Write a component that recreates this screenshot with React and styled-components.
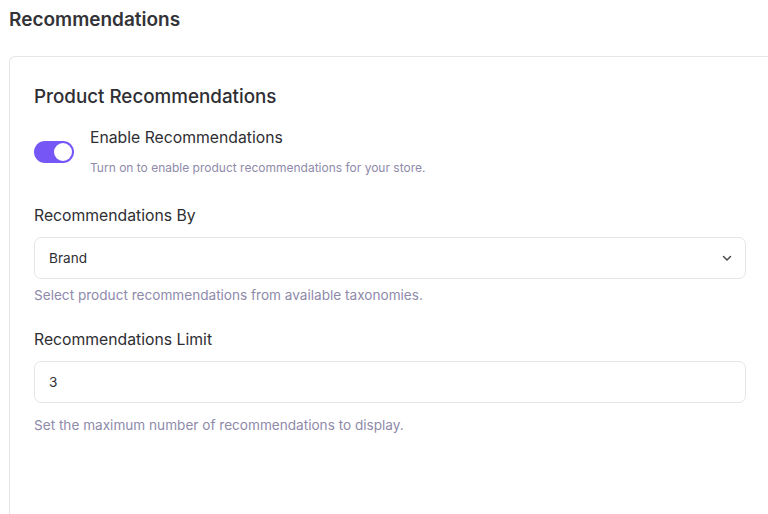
import React from "react";
import styled, { createGlobalStyle } from "styled-components";

const Global = createGlobalStyle`
  html, body { margin: 0; padding: 0; background: #fff; }
  body { font-family: Inter, "Noto Sans", sans-serif; color: #2e2e33; -webkit-font-smoothing: antialiased; }
  * { box-sizing: border-box; }
`;

const Page = styled.div`
  padding: 9px 0 0 9px;
  height: 514px;
  overflow: hidden;
`;

const PageTitle = styled.h1`
  margin: 0;
  font-size: 19px;
  font-weight: 600;
  line-height: 22px;
  color: #333338;
`;

const Card = styled.div`
  margin-top: 25px;
  border: 1px solid #e6e6e9;
  border-right: none;
  border-radius: 6px 0 0 0;
  padding: 28px 0 80px 24px;
  min-height: 500px;
`;

const CardTitle = styled.h2`
  margin: 0;
  font-size: 18.8px;
  font-weight: 500;
  line-height: 24px;
  color: #2e2e33;
`;

const ToggleRow = styled.div`
  display: flex;
  gap: 16px;
  margin-top: 18px;
`;

const Switch = styled.div`
  width: 40px;
  height: 22px;
  border-radius: 11px;
  background: ${p => (p.$on ? "#7657f6" : "#d4d4d8")};
  position: relative;
  margin-top: 14px;
  flex-shrink: 0;
`;

const Knob = styled.span`
  position: absolute;
  top: 2px;
  left: ${p => (p.$on ? "20px" : "2px")};
  width: 18px;
  height: 18px;
  border-radius: 50%;
  background: #fff;
`;

const ToggleText = styled.div`
  display: flex;
  flex-direction: column;
`;

const Label = styled.div`
  font-size: 15.75px;
  line-height: 22px;
  color: #2e2e33;
`;

const Help = styled.div`
  font-size: ${p => p.$size || 13.6}px;
  line-height: 18px;
  color: #8e8aaa;
  margin-top: ${p => p.$mt || 0}px;
`;

const Field = styled.div`
  margin-top: ${p => p.$mt}px;
  margin-right: 22px;
`;

const FieldLabel = styled.div`
  font-size: 15.75px;
  line-height: 22px;
  color: #2e2e33;
  margin-bottom: 10px;
`;

const Box = styled.div`
  height: 42px;
  border: 1px solid #e6e6e9;
  border-radius: 7px;
  display: flex;
  align-items: center;
  justify-content: space-between;
  padding: 0 12px 0 14px;
  font-size: 13.6px;
  color: #2e2e33;
  background: #fff;
`;

const Chevron = () => (
  <svg width="12" height="12" viewBox="0 0 12 12" fill="none">
    <path d="M2.5 4.5 6 8l3.5-3.5" stroke="#4a4a50" strokeWidth="1.5" strokeLinecap="round" strokeLinejoin="round" />
  </svg>
);

export default function App() {
  return (
    <>
      <Global />
      <Page>
        <PageTitle>Recommendations</PageTitle>
        <Card>
          <CardTitle>Product Recommendations</CardTitle>
          <ToggleRow>
            <Switch $on>
              <Knob $on />
            </Switch>
            <ToggleText>
              <Label>Enable Recommendations</Label>
              <Help $size={12} $mt={10}>Turn on to enable product recommendations for your store.</Help>
            </ToggleText>
          </ToggleRow>
          <Field $mt={28}>
            <FieldLabel>Recommendations By</FieldLabel>
            <Box>
              <span>Brand</span>
              <Chevron />
            </Box>
            <Help $mt={7}>Select product recommendations from available taxonomies.</Help>
          </Field>
          <Field $mt={25}>
            <FieldLabel>Recommendations Limit</FieldLabel>
            <Box>
              <span>3</span>
            </Box>
            <Help $mt={13}>Set the maximum number of recommendations to display.</Help>
          </Field>
        </Card>
      </Page>
    </>
  );
}
